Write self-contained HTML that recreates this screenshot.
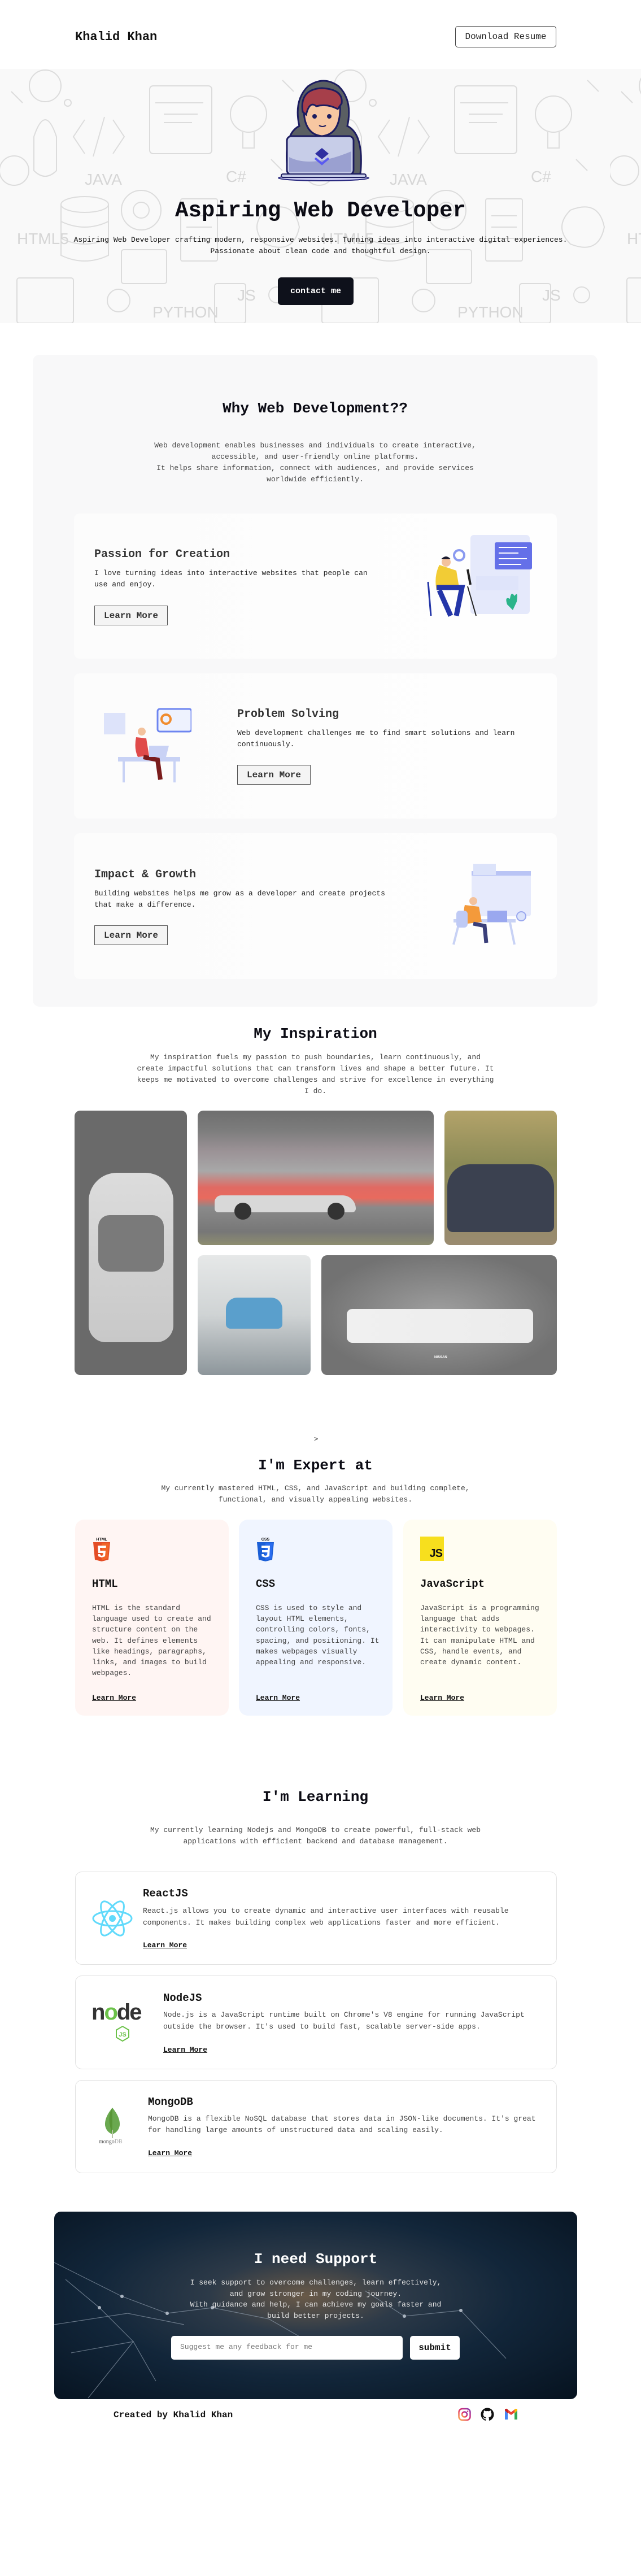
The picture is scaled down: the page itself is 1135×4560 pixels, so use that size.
<!DOCTYPE html>
<html><head><meta charset="utf-8">
<style>
*{margin:0;padding:0;box-sizing:border-box}
body{width:1135px;height:4560px;position:relative;background:#fff;font-family:"Liberation Mono",monospace;color:#111;overflow:hidden}
.a{position:absolute}
.c{text-align:center}
h2{font-size:26px;font-weight:bold;line-height:32px;color:#0b0b14}
.p{font-size:13px;line-height:20px;color:#333}
.btn{border:1px solid #555;background:#f4f4f4;font-size:16px;font-weight:bold;color:#333;display:flex;align-items:center;justify-content:center}
.card{background:linear-gradient(90deg,#fcfcfc,#fefefe);border-radius:10px}
.lm{font-size:13px;font-weight:bold;text-decoration:underline;color:#111}
.ec{border-radius:16px}
.lc{border:1px solid #e2e2e2;border-radius:12px;background:#fff}
</style></head><body>

<!-- header -->
<div class="a" style="left:133px;top:52px;font-size:22px;font-weight:bold;line-height:28px">Khalid Khan</div>
<div class="a" style="left:806px;top:46px;width:179px;height:38px;border:1px solid #444;border-radius:5px;font-size:16px;display:flex;align-items:center;justify-content:center;color:#222">Download Resume</div>

<!-- hero background -->
<div class="a" style="left:0;top:122px;width:1135px;height:450px;background:#f9f9f9;overflow:hidden">
<svg width="1135" height="450" xmlns="http://www.w3.org/2000/svg">
<defs><pattern id="dp" width="540" height="450" patternUnits="userSpaceOnUse">
<g fill="none" stroke="#dcdcdc" stroke-width="2">
<circle cx="80" cy="30" r="28"/><rect x="265" y="30" width="110" height="120" rx="6"/><line x1="275" y1="60" x2="360" y2="60"/><line x1="290" y1="80" x2="350" y2="80"/><line x1="290" y1="95" x2="340" y2="95"/>
<path d="M150 90 L130 120 L150 150"/><path d="M200 90 L220 120 L200 150"/><line x1="185" y1="85" x2="165" y2="155"/>
<ellipse cx="150" cy="240" rx="42" ry="14"/><path d="M108 240 V330 Q150 350 192 330 V240"/><path d="M108 270 Q150 290 192 270"/><path d="M108 300 Q150 320 192 300"/>
<circle cx="250" cy="250" r="35"/><circle cx="250" cy="250" r="14"/>
<rect x="320" y="230" width="65" height="110" rx="3"/><line x1="330" y1="260" x2="375" y2="260"/><line x1="330" y1="280" x2="375" y2="280"/><line x1="330" y1="300" x2="375" y2="300"/>
<circle cx="440" cy="80" r="32"/><path d="M430 112 V140 H450 V112"/><circle cx="25" cy="180" r="26"/><path d="M60 120 Q80 60 100 120 V180 Q80 200 60 180Z"/>
<rect x="30" y="370" width="100" height="80" rx="4"/><circle cx="210" cy="410" r="20"/><rect x="380" y="380" width="55" height="70" rx="4"/>
<path d="M470 250 Q520 230 530 280 Q520 330 470 310 Q440 280 470 250"/><rect x="215" y="320" width="80" height="60" rx="4"/>
<path d="M20 40 L40 60 M500 20 L520 40 M480 160 L500 180"/><circle cx="490" cy="400" r="14"/><circle cx="120" cy="60" r="6"/>
</g>
<g fill="#d6d6d6" font-family="Liberation Sans" font-size="28"><text x="150" y="205">JAVA</text><text x="30" y="310">HTML5</text><text x="270" y="440">PYTHON</text><text x="400" y="200">C#</text><text x="420" y="410">JS</text></g>
</pattern></defs>
<rect width="1135" height="450" fill="url(#dp)"/>
</svg>
</div>

<!-- avatar -->
<svg class="a" style="left:490px;top:138px" width="165" height="185" viewBox="0 0 165 185">
<ellipse cx="83" cy="177" rx="80" ry="5" fill="#c9c9ee" stroke="#2b2b80" stroke-width="2"/>
<path d="M20 170 Q10 100 40 85 Q30 40 55 15 Q83 -5 110 15 Q135 40 125 85 Q155 100 148 170Z" fill="#5a5f63" stroke="#1c1c60" stroke-width="3"/>
<path d="M48 60 Q45 25 80 22 Q115 25 112 60 Q110 100 80 103 Q50 100 48 60Z" fill="#f7c7a1" stroke="#1c1c60" stroke-width="3"/>
<path d="M46 60 Q40 20 80 18 Q118 20 115 45 L108 55 Q90 45 70 50 Q58 40 52 65Z" fill="#a63f4a" stroke="#1c1c60" stroke-width="3"/>
<circle cx="67" cy="68" r="4" fill="#1c1c60"/><circle cx="93" cy="68" r="4" fill="#1c1c60"/>
<path d="M75 84 Q81 88 87 84" stroke="#1c1c60" stroke-width="2" fill="none"/>
<rect x="18" y="103" width="118" height="68" rx="8" fill="#c7cde8" stroke="#1c1c60" stroke-width="3"/>
<path d="M22 140 Q60 160 132 130 V166 H22Z" fill="#9aa0d0"/>
<path d="M80 124 L92 134 L80 144 L68 134Z" fill="#2f2fa0"/><path d="M68 142 L80 152 L92 142" stroke="#5a5af0" stroke-width="4" fill="none"/>
<rect x="8" y="170" width="150" height="6" rx="3" fill="#c7cde8" stroke="#1c1c60" stroke-width="2"/>
</svg>

<div class="a c" style="left:0;width:1135px;top:350px;font-size:39px;font-weight:bold;line-height:46px;color:#0b0b14">Aspiring Web Developer</div>
<div class="a c p" style="left:0;width:1135px;top:415px;color:#111">Aspiring Web Developer crafting modern, responsive websites. Turning ideas into interactive digital experiences.<br>Passionate about clean code and thoughtful design.</div>
<div class="a" style="left:492px;top:491px;width:134px;height:49px;background:#0e111b;border-radius:6px;color:#fff;font-weight:bold;font-size:15px;display:flex;align-items:center;justify-content:center">contact me</div>

<!-- why -->
<div class="a" style="left:58px;top:628px;width:1000px;height:1154px;background:#f8f8f9;border-radius:12px"></div>
<h2 class="a c" style="left:58px;width:1000px;top:707px">Why Web Development??</h2>
<div class="a c p" style="left:58px;width:1000px;top:779px;color:#444">Web development enables businesses and individuals to create interactive,<br>accessible, and user-friendly online platforms.<br>It helps share information, connect with audiences, and provide services<br>worldwide efficiently.</div>

<div class="a card" style="left:131px;top:909px;width:855px;height:257px"></div>
<div class="a" style="left:167px;top:970px;font-size:20px;font-weight:bold;color:#333;line-height:24px">Passion for Creation</div>
<div class="a p" style="left:167px;top:1005px;width:500px;line-height:20px;color:#222">I love turning ideas into interactive websites that people can use and enjoy.</div>
<div class="a btn" style="left:167px;top:1072px;width:130px;height:35px">Learn More</div>
<svg class="a" style="left:743px;top:945px" width="205" height="170">
<rect x="90" y="2" width="105" height="140" rx="6" fill="#e5e9fb"/><rect x="133" y="15" width="66" height="48" rx="3" fill="#6470e8"/>
<g stroke="#fff" stroke-width="2"><line x1="140" y1="24" x2="190" y2="24"/><line x1="140" y1="34" x2="175" y2="34"/><line x1="140" y1="44" x2="190" y2="44"/><line x1="140" y1="54" x2="180" y2="54"/></g>
<circle cx="70" cy="38" r="9" fill="none" stroke="#8a9af0" stroke-width="4"/><rect x="100" y="75" width="75" height="25" fill="#dfe4fa"/>
<path d="M35 55 Q25 75 30 100 L70 95 L65 65Z" fill="#f2cc35"/><circle cx="47" cy="50" r="8" fill="#f3c29d"/><path d="M38 45 Q47 35 55 45" fill="#1c1c30"/>
<path d="M30 95 L75 95 L65 145 M35 100 L55 145" stroke="#2436a8" stroke-width="9" fill="none"/><line x1="15" y1="85" x2="20" y2="145" stroke="#2436a8" stroke-width="3"/>
<line x1="85" y1="93" x2="100" y2="145" stroke="#222" stroke-width="2"/><path d="M85 63 L90 90" stroke="#222" stroke-width="4"/>
<path d="M155 125 Q150 110 160 115 Q162 100 168 110 Q175 100 172 120 L165 135Z" fill="#2bb48a"/>
</svg>

<div class="a card" style="left:131px;top:1192px;width:855px;height:257px"></div>
<svg class="a" style="left:179px;top:1250px" width="160" height="140">
<rect x="5" y="12" width="38" height="38" fill="#dde3fa"/><rect x="100" y="5" width="60" height="40" rx="4" fill="#eef2fe" stroke="#6d85f0" stroke-width="3"/><circle cx="115" cy="23" r="8" fill="none" stroke="#f08c2e" stroke-width="4"/>
<rect x="30" y="90" width="110" height="8" fill="#c8d2f5"/><line x1="40" y1="98" x2="40" y2="135" stroke="#c8d2f5" stroke-width="4"/><line x1="130" y1="98" x2="130" y2="135" stroke="#c8d2f5" stroke-width="4"/>
<circle cx="72" cy="45" r="7" fill="#f3c29d"/><path d="M62 55 Q58 75 65 90 L85 88 L80 57Z" fill="#e04a4a"/><path d="M75 90 L100 95 L105 130" stroke="#7a1c1c" stroke-width="8" fill="none"/>
<path d="M85 70 L120 70 L115 90 L85 90Z" fill="#c9d2f5"/>
</svg>
<div class="a" style="left:420px;top:1253px;font-size:20px;font-weight:bold;color:#333;line-height:24px">Problem Solving</div>
<div class="a p" style="left:420px;top:1288px;width:500px;line-height:20px;color:#222">Web development challenges me to find smart solutions and learn continuously.</div>
<div class="a btn" style="left:420px;top:1354px;width:130px;height:35px">Learn More</div>

<div class="a card" style="left:131px;top:1475px;width:855px;height:258px"></div>
<div class="a" style="left:167px;top:1537px;font-size:20px;font-weight:bold;color:#333;line-height:24px">Impact &amp; Growth</div>
<div class="a p" style="left:167px;top:1572px;width:540px;line-height:20px;color:#222">Building websites helps me grow as a developer and create projects that make a difference.</div>
<div class="a btn" style="left:167px;top:1638px;width:130px;height:35px">Learn More</div>
<svg class="a" style="left:783px;top:1527px" width="160" height="150">
<rect x="52" y="15" width="105" height="80" rx="4" fill="#e6eafc"/><rect x="52" y="15" width="105" height="8" fill="#b9c4f5"/><rect x="55" y="2" width="40" height="20" fill="#dce3fa"/>
<rect x="20" y="100" width="110" height="6" fill="#c8d2f5"/><line x1="30" y1="106" x2="20" y2="145" stroke="#c8d2f5" stroke-width="4"/><line x1="120" y1="106" x2="128" y2="145" stroke="#c8d2f5" stroke-width="4"/>
<path d="M40 75 Q35 95 45 108 L70 105 L65 78Z" fill="#f49a3b"/><circle cx="55" cy="68" r="7" fill="#f3c29d"/><rect x="25" y="85" width="20" height="30" rx="6" fill="#bfcaf5"/>
<path d="M55 108 L75 112 L78 142" stroke="#3a3f7a" stroke-width="7" fill="none"/><rect x="80" y="85" width="35" height="20" fill="#9aa8ef"/><circle cx="140" cy="95" r="8" fill="#dbe3fb" stroke="#9aa8ef" stroke-width="2"/>
</svg>

<!-- inspiration -->
<h2 class="a c" style="left:0;width:1117px;top:1814px">My Inspiration</h2>
<div class="a c p" style="left:200px;width:717px;top:1862px;color:#444">My inspiration fuels my passion to push boundaries, learn continuously, and<br>create impactful solutions that can transform lives and shape a better future. It<br>keeps me motivated to overcome challenges and strive for excellence in everything<br>I do.</div>

<div class="a" style="left:132px;top:1966px;width:199px;height:468px;border-radius:10px;overflow:hidden;background:#6a6a6a">
<div class="a" style="left:25px;top:110px;width:150px;height:300px;border-radius:50px 50px 30px 30px;background:linear-gradient(#dcdcdc,#c8c8c8)"></div>
<div class="a" style="left:42px;top:185px;width:116px;height:100px;border-radius:20px;background:#7a7a7a"></div>
</div>
<div class="a" style="left:350px;top:1966px;width:418px;height:238px;border-radius:10px;overflow:hidden;background:linear-gradient(#6e6e6e 0%,#7d7d7d 15%,#9b9296 30%,#a8a8a8 45%,#e06a63 57%,#e86a5e 65%,#8a8a8a 72%,#777 90%,#8d8d70 100%)">
<div class="a" style="left:30px;top:150px;width:250px;height:30px;background:#d8d8d8;border-radius:15px 30px 8px 8px"></div>
<div class="a" style="left:65px;top:163px;width:30px;height:30px;background:#333;border-radius:50%"></div>
<div class="a" style="left:230px;top:163px;width:30px;height:30px;background:#333;border-radius:50%"></div>
</div>
<div class="a" style="left:787px;top:1966px;width:199px;height:238px;border-radius:10px;overflow:hidden;background:linear-gradient(#b3a36a,#8b8a56 40%,#9a8b70 100%)">
<div class="a" style="left:5px;top:95px;width:189px;height:120px;border-radius:40px 40px 10px 10px;background:#3b4150"></div>
</div>
<div class="a" style="left:350px;top:2222px;width:200px;height:212px;border-radius:10px;overflow:hidden;background:linear-gradient(#e6e8e8,#cfd3d4 50%,#8d969b 100%)">
<div class="a" style="left:50px;top:75px;width:100px;height:55px;border-radius:20px 20px 8px 8px;background:#5a9fcc"></div>
</div>
<div class="a" style="left:569px;top:2222px;width:417px;height:212px;border-radius:10px;overflow:hidden;background:radial-gradient(ellipse at 50% 50%,#a0a0a0,#727272 75%)">
<div class="a" style="left:45px;top:95px;width:330px;height:60px;border-radius:10px;background:linear-gradient(90deg,#f0f0f0,#ececec)"></div>
<div class="a" style="left:200px;top:178px;font:bold 6px 'Liberation Sans';color:#fff">NISSAN</div>
</div>

<!-- expert -->
<div class="a" style="left:556px;top:2541px;font-size:12px">&gt;</div>
<h2 class="a c" style="left:0;width:1117px;top:2578px">I'm Expert at</h2>
<div class="a c p" style="left:0;width:1117px;top:2625px;color:#444">My currently mastered HTML, CSS, and JavaScript and building complete,<br>functional, and visually appealing websites.</div>

<div class="a ec" style="left:133px;top:2690px;width:272px;height:347px;background:#fff5f3"></div>
<div class="a ec" style="left:423px;top:2690px;width:272px;height:347px;background:#f0f5ff"></div>
<div class="a ec" style="left:714px;top:2690px;width:272px;height:347px;background:#fffdf2"></div>

<svg class="a" style="left:163px;top:2720px" width="34" height="44" viewBox="0 0 34 44"><text x="17" y="7" font-family="Liberation Sans" font-weight="bold" font-size="7" text-anchor="middle">HTML</text><path d="M2 10 L32 10 L29 41 L17 44 L5 41Z" fill="#e44d26"/><path d="M17 12 L30 12 L27.5 39 L17 42Z" fill="#f16529"/><path d="M10 16 H25 L24.5 20 H14 L14.5 25 H24 L23 35 L17 37 L11 35 L10.7 31 H14.5 L14.7 33 L17 34 L19.5 33 L20 29 H11Z" fill="#fff"/></svg>
<svg class="a" style="left:453px;top:2720px" width="34" height="44" viewBox="0 0 34 44"><text x="17" y="7" font-family="Liberation Sans" font-weight="bold" font-size="7" text-anchor="middle">CSS</text><path d="M2 10 L32 10 L29 41 L17 44 L5 41Z" fill="#1b5fd6"/><path d="M17 12 L30 12 L27.5 39 L17 42Z" fill="#2a6df0"/><path d="M10 16 H25 L24 35 L17 37 L10.5 35 L10.3 31 H14 L14.2 33 L17 34 L20 33 L20.5 28 H11 V24 H21 L21.3 20 H10Z" fill="#fff"/></svg>
<div class="a" style="left:744px;top:2720px;width:42px;height:43px;background:#f7df1e"><div class="a" style="right:3px;bottom:1px;font:bold 20px 'Liberation Sans';letter-spacing:-1px">JS</div></div>

<div class="a" style="left:163px;top:2793px;font-size:19px;font-weight:bold">HTML</div>
<div class="a" style="left:453px;top:2793px;font-size:19px;font-weight:bold">CSS</div>
<div class="a" style="left:744px;top:2793px;font-size:19px;font-weight:bold">JavaScript</div>
<div class="a p" style="left:163px;top:2837px;width:222px;line-height:19.2px;color:#444">HTML is the standard language used to create and structure content on the web. It defines elements like headings, paragraphs, links, and images to build webpages.</div>
<div class="a p" style="left:453px;top:2837px;width:222px;line-height:19.2px;color:#444">CSS is used to style and layout HTML elements, controlling colors, fonts, spacing, and positioning. It makes webpages visually appealing and responsive.</div>
<div class="a p" style="left:744px;top:2837px;width:222px;line-height:19.2px;color:#444">JavaScript is a programming language that adds interactivity to webpages. It can manipulate HTML and CSS, handle events, and create dynamic content.</div>
<div class="a lm" style="left:163px;top:2998px">Learn More</div>
<div class="a lm" style="left:453px;top:2998px">Learn More</div>
<div class="a lm" style="left:744px;top:2998px">Learn More</div>

<!-- learning -->
<h2 class="a c" style="left:0;width:1117px;top:3165px">I'm Learning</h2>
<div class="a c p" style="left:0;width:1117px;top:3230px;color:#444">My currently learning Nodejs and MongoDB to create powerful, full-stack web<br>applications with efficient backend and database management.</div>

<div class="a lc" style="left:133px;top:3313px;width:853px;height:165px"></div>
<svg class="a" style="left:163px;top:3363px" width="72" height="66" viewBox="-36 -33 72 66"><g fill="none" stroke="#61dafb" stroke-width="3"><ellipse rx="34" ry="13"/><ellipse rx="34" ry="13" transform="rotate(60)"/><ellipse rx="34" ry="13" transform="rotate(120)"/></g><circle r="6" fill="#61dafb"/></svg>
<div class="a" style="left:253px;top:3341px;font-size:19px;font-weight:bold">ReactJS</div>
<div class="a p" style="left:253px;top:3372px;width:700px;line-height:21px;color:#444">React.js allows you to create dynamic and interactive user interfaces with reusable components. It makes building complex web applications faster and more efficient.</div>
<div class="a lm" style="left:253px;top:3436px">Learn More</div>

<div class="a lc" style="left:133px;top:3497px;width:853px;height:166px"></div>
<div class="a" style="left:162px;top:3540px;font:bold 40px 'Liberation Sans';color:#333;letter-spacing:-2px">n<span style="color:#6cc24a">o</span>de</div>
<svg class="a" style="left:205px;top:3586px" width="24" height="28" viewBox="0 0 24 28"><path d="M12 1 L23 7.5 V20.5 L12 27 L1 20.5 V7.5Z" fill="none" stroke="#6cc24a" stroke-width="2"/><text x="12" y="19" font-family="Liberation Sans" font-size="11" font-weight="bold" fill="#6cc24a" text-anchor="middle">JS</text></svg>
<div class="a" style="left:289px;top:3526px;font-size:19px;font-weight:bold">NodeJS</div>
<div class="a p" style="left:289px;top:3556px;width:680px;line-height:21px;color:#444">Node.js is a JavaScript runtime built on Chrome's V8 engine for running JavaScript outside the browser. It's used to build fast, scalable server-side apps.</div>
<div class="a lm" style="left:289px;top:3621px">Learn More</div>

<div class="a lc" style="left:133px;top:3682px;width:853px;height:165px"></div>
<svg class="a" style="left:183px;top:3730px" width="32" height="55" viewBox="0 0 32 55"><path d="M16 1 Q30 18 29 32 Q27 44 16 48 Q5 44 3 32 Q2 18 16 1Z" fill="#6aa84f"/><path d="M16 1 Q5 18 16 48" fill="#589636"/><line x1="16" y1="40" x2="16" y2="55" stroke="#b8c4a8" stroke-width="2"/></svg>
<div class="a" style="left:175px;top:3786px;font:10px 'Liberation Serif';color:#555">mongo<span style="color:#aaa">DB</span></div>
<div class="a" style="left:262px;top:3710px;font-size:19px;font-weight:bold">MongoDB</div>
<div class="a p" style="left:262px;top:3741px;width:710px;line-height:20px;color:#444">MongoDB is a flexible NoSQL database that stores data in JSON-like documents. It's great for handling large amounts of unstructured data and scaling easily.</div>
<div class="a lm" style="left:262px;top:3804px">Learn More</div>

<!-- support -->
<div class="a" style="left:96px;top:3915px;width:926px;height:332px;border-radius:12px;overflow:hidden;background:radial-gradient(ellipse at 48% 45%,#6a5a48 0%,#2d3a48 25%,#12263a 55%,#06121f 100%)">
<svg class="a" style="left:0;top:0" width="926" height="332"><g stroke="#8a98a8" stroke-width="1.2" fill="none" opacity="0.7"><path d="M0 90 L120 150 L200 180 L280 170 L380 190 L450 230"/><path d="M20 120 L80 170 L140 230 L180 300"/><path d="M0 200 L130 180 L230 200"/><path d="M550 140 L620 185 L720 175 L800 260"/><path d="M30 250 L140 230 L60 330"/></g><g fill="#aab4c0"><circle cx="120" cy="150" r="3"/><circle cx="200" cy="180" r="3"/><circle cx="280" cy="170" r="3"/><circle cx="80" cy="170" r="3"/><circle cx="620" cy="185" r="3"/><circle cx="720" cy="175" r="3"/></g></svg>
</div>
<div class="a c" style="left:96px;width:926px;top:3983px;font-size:26px;font-weight:bold;line-height:32px;color:#fff">I need Support</div>
<div class="a c p" style="left:96px;width:926px;top:4031px;color:#e6e6e6;line-height:19.6px">I seek support to overcome challenges, learn effectively,<br>and grow stronger in my coding journey.<br>With guidance and help, I can achieve my goals faster and<br>build better projects.</div>
<div class="a" style="left:303px;top:4135px;width:410px;height:42px;background:#fff;border-radius:5px;font-size:13px;color:#777;padding:12px 16px">Suggest me any feedback for me</div>
<div class="a" style="left:726px;top:4135px;width:88px;height:42px;background:#fff;border-radius:5px;font-size:16px;font-weight:bold;display:flex;align-items:center;justify-content:center">submit</div>

<!-- footer -->
<div class="a" style="left:201px;top:4264px;font-size:16px;font-weight:bold;line-height:22px">Created by Khalid Khan</div>
<svg class="a" style="left:810px;top:4262px" width="25" height="24" viewBox="0 0 24 24"><defs><linearGradient id="ig" x1="0" y1="1" x2="1" y2="0"><stop offset="0" stop-color="#fdb44b"/><stop offset=".5" stop-color="#e1306c"/><stop offset="1" stop-color="#833ab4"/></linearGradient></defs><rect x="2" y="2" width="20" height="20" rx="6" fill="none" stroke="url(#ig)" stroke-width="2.5"/><circle cx="12" cy="12" r="4.5" fill="none" stroke="url(#ig)" stroke-width="2.5"/><circle cx="17.5" cy="6.5" r="1.3" fill="#c13584"/></svg>
<svg class="a" style="left:851px;top:4262px" width="24" height="24" viewBox="0 0 24 24"><path fill="#111" d="M12 .5C5.65.5.5 5.65.5 12c0 5.08 3.29 9.39 7.86 10.91.58.1.79-.25.79-.56v-2c-3.2.7-3.87-1.54-3.87-1.54-.52-1.33-1.28-1.69-1.28-1.69-1.04-.71.08-.7.08-.7 1.15.08 1.76 1.18 1.76 1.18 1.03 1.76 2.69 1.25 3.35.96.1-.74.4-1.25.73-1.54-2.55-.29-5.24-1.28-5.24-5.68 0-1.26.45-2.28 1.18-3.09-.12-.29-.51-1.46.11-3.05 0 0 .97-.31 3.17 1.18a11 11 0 0 1 5.77 0c2.2-1.49 3.17-1.18 3.17-1.18.62 1.59.23 2.76.11 3.05.74.81 1.18 1.83 1.18 3.09 0 4.41-2.69 5.38-5.26 5.67.41.36.78 1.06.78 2.14v3.17c0 .31.21.67.8.56C20.21 21.39 23.5 17.08 23.5 12 23.5 5.65 18.35.5 12 .5z"/></svg>
<svg class="a" style="left:893px;top:4263px" width="24" height="22" viewBox="0 0 24 22"><path d="M1 4 V20 H6 V9Z" fill="#4285f4"/><path d="M18 9 V20 H23 V4Z" fill="#34a853"/><path d="M1 4 L12 12 L23 4 L23 2 Q21 0 19 1.5 L12 7 L5 1.5 Q3 0 1 2Z" fill="#ea4335"/><path d="M18 9 L23 4 V2 Q21 0 19 1.5 L18 2.2Z" fill="#fbbc04"/><path d="M1 2 Q3 0 5 1.5 L6 2.2 V9 L1 4Z" fill="#c5221f"/></svg>

</body></html>
